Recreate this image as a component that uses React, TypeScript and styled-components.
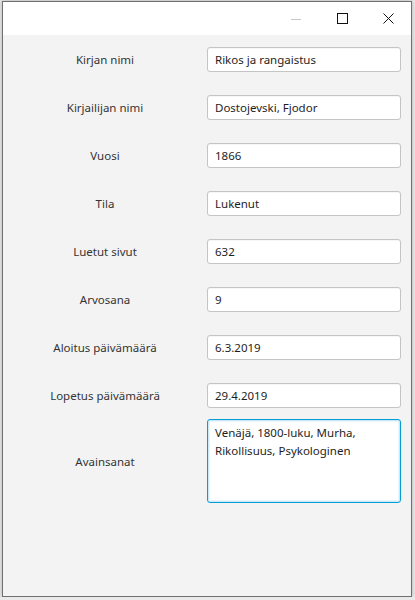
import { Fragment } from 'react';
import styled, { createGlobalStyle } from 'styled-components';

const Global = createGlobalStyle`
  html, body {
    margin: 0;
    padding: 0;
    background: #e9e9e9;
  }
  * {
    box-sizing: border-box;
  }
`;

const Window = styled.div`
  margin: 1px 0 0 2px;
  width: 410px;
  height: 596px;
  border: 1px solid #6f6f6f;
  background: #f3f3f3;
  box-shadow: 0 0 4px rgba(0, 0, 0, 0.25);
  display: flex;
  flex-direction: column;
  font-family: 'Noto Sans', 'Open Sans', sans-serif;
  font-size: 11.5px;
`;

const TitleBar = styled.div`
  height: 33px;
  background: #ffffff;
  display: flex;
  justify-content: flex-end;
  flex-shrink: 0;
`;

const CaptionButton = styled.div`
  width: 46px;
  height: 33px;
  display: flex;
  align-items: center;
  justify-content: center;
`;

const Form = styled.div`
  display: grid;
  grid-template-columns: 204px 194px;
  grid-template-rows: repeat(8, 48px) 84px;
  align-items: center;
`;

const Label = styled.div`
  text-align: center;
  color: #333333;
`;

const Field = styled.div`
  height: 25px;
  background: #ffffff;
  border: 1px solid #c4c4c4;
  border-radius: 3px;
  box-shadow: inset 0 1px 1px rgba(0, 0, 0, 0.04);
  padding: 0 7px;
  display: flex;
  align-items: center;
  color: #1e1e1e;
  white-space: nowrap;
  overflow: hidden;
`;

const TextArea = styled.div`
  height: 84px;
  background: #ffffff;
  border: 1px solid #039ed3;
  border-radius: 3px;
  box-shadow: inset 0 0 0 1px #cbe8f6, inset 0 0 0 2px #eaf6fc;
  padding: 4px 7px;
  color: #1e1e1e;
  line-height: 18px;
`;

const rows: [string, string][] = [
  ['Kirjan nimi', 'Rikos ja rangaistus'],
  ['Kirjailijan nimi', 'Dostojevski, Fjodor'],
  ['Vuosi', '1866'],
  ['Tila', 'Lukenut'],
  ['Luetut sivut', '632'],
  ['Arvosana', '9'],
  ['Aloitus päivämäärä', '6.3.2019'],
  ['Lopetus päivämäärä', '29.4.2019'],
];

export default function App() {
  return (
    <>
      <Global />
      <Window>
        <TitleBar>
          <CaptionButton>
            <svg width="10" height="10" viewBox="0 0 10 10">
              <path d="M0 5.5H10" stroke="#c6c6c6" strokeWidth="1" />
            </svg>
          </CaptionButton>
          <CaptionButton>
            <svg width="11" height="11" viewBox="0 0 11 11">
              <rect x="0.5" y="0.5" width="10" height="10" fill="none" stroke="#111" strokeWidth="1" />
            </svg>
          </CaptionButton>
          <CaptionButton>
            <svg width="11" height="11" viewBox="0 0 11 11">
              <path d="M0.5 0.5L10.5 10.5M10.5 0.5L0.5 10.5" stroke="#111" strokeWidth="1" />
            </svg>
          </CaptionButton>
        </TitleBar>
        <Form>
          {rows.map(([label, value]) => (
            <Fragment key={label}>
              <Label>{label}</Label>
              <Field>{value}</Field>
            </Fragment>
          ))}
          <Label>Avainsanat</Label>
          <TextArea>
            Venäjä, 1800-luku, Murha,
            <br />
            Rikollisuus, Psykologinen
          </TextArea>
        </Form>
      </Window>
    </>
  );
}
